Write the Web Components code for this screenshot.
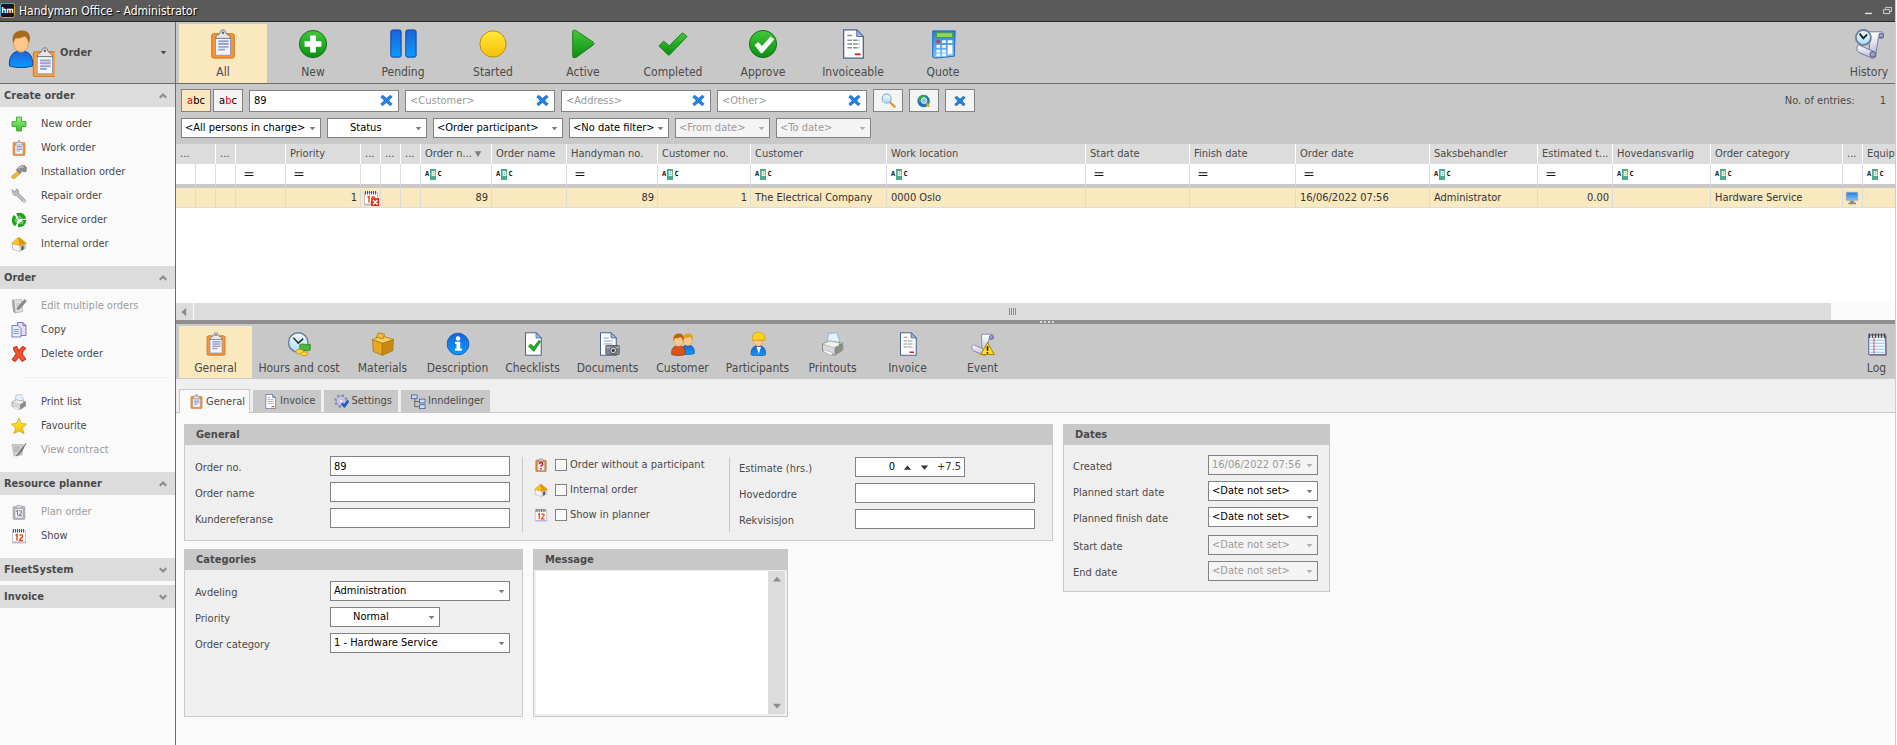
<!DOCTYPE html>
<html lang="en">
<head>
<meta charset="utf-8">
<title>Handyman Office - Administrator</title>
<style>
  html, body { margin: 0; height: 100%; }
  body {
    font: 11px/16px "DejaVu Sans Condensed", "DejaVu Sans", sans-serif;
    color: #4a4a4a;
    background: #fff;
    --bar: #c8c8c8;
    --soft: #dcdcdc;
    --pick: #fae8bf;
    --edge: #828282;
    --rule: #6b6b6b;
  }
</style>
</head>
<body>
<hm-app></hm-app>

<script>
/* ---------- icon drawings, all on a 32 x 32 canvas ---------- */
const DOC = '<path d="M6 1h14l7 7v23H6z" fill="#fff" stroke="#4a6496" stroke-width="1.4"/><path d="M20 1v7h7z" fill="#9dbbe6" stroke="#4a6496"/>';
const BOARD = (a, b) => `<rect x="4" y="5" width="24" height="26" rx="2" fill="${a}" stroke="${b}"/><path d="M8 9h16v19H8z" fill="#f4f4fb" stroke="#8d93b5"/>`;
const CLIP = '<path d="M8 10c0-4 4-3 5-6s1-3 3-3 2 0 3 3 5 2 5 6z" fill="#e4e6ea" stroke="#6f7278"/><circle cx="16" cy="4" r="1.3" fill="#666"/>';
const CAL = '<path d="M3 5h26v25H3z" fill="#fff" stroke="#8a8ac2"/><path d="M3 27h26v3H3z" fill="#b6b8e4"/><path d="M5 2v7M9 2v7M13 2v7M17 2v7M21 2v7M25 2v7" stroke="#555" stroke-width="2"/><path d="M9 15l3-2v12M17 15c3-3 7-1 6 2-1 3-5 4-6 8h7" fill="none" stroke="#f04a14" stroke-width="3"/>';
const CLOCK = (x, y, r) => `<circle cx="${x}" cy="${y}" r="${r}" fill="url(#sky)" stroke="#6d8399" stroke-width="2"/><path d="M${x - r / 2} ${y - r / 2}L${x} ${y + 1}L${x + r / 2} ${y - r / 2.5}" fill="none" stroke="#222" stroke-width="2"/>`;
const SCROLL = '<path d="M14 3h13c4 0 4 7 0 7l-3-1c-1 8-2 12-3 21l-7-1C15 20 14 12 14 3z" fill="url(#par)" stroke="#74749b"/><path d="M3 17l16 7c4 2 2 8-2 7L3 25c-3-2-2-8 0-8z" fill="url(#par)" stroke="#74749b"/><circle cx="18" cy="27" r="3" fill="#9c9cc8" stroke="#55557d"/><circle cx="27" cy="7" r="2.6" fill="#9c9cc8" stroke="#55557d"/>';
const PERSON = (x, y, s, hair, body, dark) => `<g transform="translate(${x} ${y}) scale(${s})"><path d="M1 31c-1-8 3-13 10-13s11 5 10 13c-4 2-16 2-20 0z" fill="${body}" stroke="${dark}"/><ellipse cx="11" cy="11" rx="6.5" ry="8" fill="#ffc88a" stroke="#d08a40" stroke-width=".6"/><path d="M4 11C2 2 8 0 12 0c7 0 8 6 6 11-1-3-2-5-4-6-3 2-6 2-8 2z" fill="${hair}"/></g>`;
const HOUSE = '<path d="M3 15l12-4 14 5v9L17 31 3 26z" fill="#f5f5f5" stroke="#999"/><path d="M17 18l12-3v10l-12 6z" fill="#c9c9c9"/><path d="M21 21l4-2v8l-4 2z" fill="#4b4b4b"/><path d="M1 15L14 3l4 1 13 11-14 4z" fill="#f7c31d" stroke="#c88f0c"/><path d="M17 19L14 3l4 1 13 11z" fill="#dd9a0a"/>';
const PRINTER = '<path d="M8 14L10 2l11-1 4 11-8 5z" fill="#e4f1ff" stroke="#8fa4bd"/><path d="M2 16l9-4 18 3v9l-11 7L2 25z" fill="#d9d9d9" stroke="#777"/><path d="M2 16l9-4 18 3-11 6z" fill="#f0f0f0" stroke="#888" stroke-width=".6"/><path d="M5 24l11 4-3 3-10-5z" fill="#fff" stroke="#999" stroke-width=".7"/><path d="M18 21l11-6v9l-11 7z" fill="#8d8d8d"/><path d="M24 16l3 1" stroke="#39b52e" stroke-width="2"/>';
const BLUEX = '<path d="M6 3c4 2 7 5 10 8 3-3 6-6 10-8l4 5c-4 2-6 5-8 8 2 3 4 6 8 8l-5 5c-3-3-6-6-9-8-3 2-6 5-10 8l-4-5c3-2 6-5 8-8-2-3-5-6-8-8z" fill="#1e84e6" stroke="#0d4a9c" stroke-width="1.4"/>';
const LINES = '<path d="M10 7h6M10 12h13M10 16h13M10 20h13" stroke="#8b8f98" stroke-width="1.6" stroke-dasharray="5 1"/><path d="M18 27h6" stroke="#e02020" stroke-width="2"/>';

const ICONS = {
  logo: '<rect x="1" y="1" width="30" height="30" rx="4" fill="#12131c" stroke="#d8b13a" stroke-width="2"/><path d="M1 28V5a4 4 0 0 1 4-4h22" fill="none" stroke="#3aa0d8" stroke-width="2"/><text x="16" y="22" text-anchor="middle" font-family="DejaVu Sans Condensed" font-weight="bold" font-size="17" fill="#fff">hm</text>',
  userOrder: PERSON(1, 1, .76, '#a8691c', 'url(#blue)', '#174aa8') + '<g transform="translate(15 12) scale(.64)">' + BOARD('#f6a040', '#cf6f12') + '<path d="M11 14h11M11 17h11M11 20h11M11 23h7" stroke="#9aa3cc" stroke-width="2"/>' + CLIP + '</g>',
  board: BOARD('#f59536', '#cf6f12') + '<path d="M11 13h11M11 16h11M11 19h11M11 22h7" stroke="#9aa3cc" stroke-width="2"/>' + CLIP,
  newCircle: '<circle cx="16" cy="16" r="14.5" fill="url(#green)" stroke="#0c6b12"/><path d="M13 7h6v6h6v6h-6v6h-6v-6H7v-6h6z" fill="#fff"/>',
  pause: '<rect x="3" y="1" width="11" height="29" rx="2" fill="url(#blue)" stroke="#0b3fa0"/><rect x="19" y="1" width="11" height="29" rx="2" fill="url(#blue)" stroke="#0b3fa0"/>',
  started: '<circle cx="16" cy="16" r="14" fill="url(#yellow)" stroke="#b98a08"/>',
  play: '<path d="M5 2c1-1 2-1 4 0l18 12c1 1 1 2 0 3L9 30c-2 1-4 1-4-1z" fill="url(#green)" stroke="#1c7a1c"/>',
  check: '<path d="M1 18l5-5 6 5L26 4l5 4-18 19c-1 1-2 1-3 0z" fill="url(#green)" stroke="#128014"/>',
  approve: '<circle cx="16" cy="16" r="14.5" fill="url(#green)" stroke="#0c6b12"/><path d="M7 17l4-3 4 4 9-10 4 3-12 14c-1 1-2 1-3 0z" fill="#fff"/>',
  invoice: DOC + LINES,
  calc: '<path d="M5 2h24l-1 27-20 2-3-1z" fill="url(#blue2)" stroke="#1b66b8"/><rect x="9" y="4" width="17" height="5" fill="#8fd46a" stroke="#4a9a2e"/><rect x="9" y="12" width="4" height="3" fill="#e03528"/><path d="M15 13.500h4M21 13.500h5M9 18.500h4M15 18.500h4M9 23.500h4M15 23.500h4M9 27.500h4M15 27.500h4" stroke="#fff" stroke-width="3"/><path d="M21 17h5v10h-5z" fill="#fff"/>',
  history: '<g transform="translate(2 0)">' + SCROLL + '</g>' + CLOCK(10, 9, 8),
  x: BLUEX,
  find: '<path d="M17 18l12 11" stroke="#f0923c" stroke-width="5" stroke-linecap="round"/><circle cx="12" cy="12" r="9.500" fill="url(#sky)" stroke="#8fb1cf" stroke-width="2.500"/>',
  globe: '<circle cx="15" cy="16" r="13.500" fill="#1f6fd6" stroke="#0c4c94"/><path d="M5 8c5-7 13-5 16-4l-3 6-8 2-3 7-4-2zM19 24l6-8 4 2c-1 6-5 10-9 12z" fill="#2fae3a"/><path d="M20 20l8 9" stroke="#f0923c" stroke-width="4"/><circle cx="16" cy="15" r="6.500" fill="#8fc4ea" stroke="#eaf4fb" stroke-width="2"/>',
  plus: '<path d="M11 2h10v9h9v10h-9v9H11v-9H2V11h9z" fill="url(#lime)" stroke="#2c9a1f" stroke-width="1.500"/>',
  hammer: '<path d="M3 29l-2-4L16 12l5 5L7 29z" fill="#f2b33a" stroke="#b87a10"/><path d="M12 10c4-6 10-8 15-7l4 4-1 8-5 1-3-3-4 5-7-5z" fill="#8d9097" stroke="#4e5157"/><path d="M15 9c3-3 7-4 10-3" stroke="#e4e6ea" stroke-width="2" fill="none"/>',
  wrench: '<path d="M3 9L2 3l4 4 4-1 0-4c4 0 6 3 5 8l14 14c2 3-2 6-5 4L11 15c-4 1-7-1-8-6z" fill="#b9bcc1" stroke="#777a80"/><circle cx="26" cy="26" r="1.500" fill="#fff"/>',
  recycle: '<circle cx="16" cy="16" r="11" fill="none" stroke="#1da51f" stroke-width="7" stroke-dasharray="19 4"/><path d="M16 5l7 7-9 2zM5 14l9 1-6 8zM27 17l-3 10-7-5z" fill="#5fd84f" stroke="#128014"/><circle cx="16" cy="16" r="3" fill="#e9f7e7"/>',
  house: HOUSE,
  edit: '<path d="M2 4l19-1 2 24-16 3z" fill="#e1e1e1" stroke="#8f8f8f"/><path d="M2 4l5 2 2 24-5-3z" fill="#a5a5a5"/><path d="M11 12h9M11 16h8M11 20h9" stroke="#b0b0b0" stroke-width="1.500"/><path d="M12 24l2-6L27 3l4 3-13 15z" fill="#8b8b8b" stroke="#6d6d6d"/>',
  copy: '<path d="M13 1h11l6 6v20H13z" fill="#e8dcf5" stroke="#6a4fa3" stroke-width="1.500"/><path d="M24 1v6h6" fill="none" stroke="#6a4fa3" stroke-width="1.500"/><path d="M2 7h12l6 6v17H2z" fill="#e9f1ff" stroke="#4a6496" stroke-width="1.500"/><path d="M5 15h11M5 19h11M5 23h11" stroke="#7ea0d8" stroke-width="2"/>',
  del: '<path d="M5 3l7-2c1 4 3 6 4 9 2-4 4-8 8-9l6 4c-5 3-7 7-8 11 2 3 5 7 8 10l-8 5c-2-3-4-6-7-9-2 4-4 7-7 9l-6-4c4-4 6-8 8-12-3-4-5-7-5-12z" fill="#f4512c" stroke="#c42a12" stroke-width="2"/>',
  printer: PRINTER,
  star: '<path d="M16 1l5 10 10 1-8 8 3 11-10-5-10 5 3-11-8-8 10-1z" fill="url(#yellow)" stroke="#c9930d" stroke-width="1.300"/>',
  contract: '<path d="M2 5h22l-2 21-16 2z" fill="#d2d2d2" stroke="#969696"/><path d="M6 10h12M6 14h11M6 18h9" stroke="#999" stroke-width="1.500"/><path d="M10 28c4-3 6-9 20-26-3 8-10 20-14 23z" fill="#777" stroke="#666"/>',
  plan: BOARD('#b9b9b9', '#969696') + '<path d="M10 15l3-2v10M16 14c3-2 6 0 5 3l-5 6h6" fill="none" stroke="#8c8c8c" stroke-width="2.500"/><path d="M10 8l2-5h8l2 5z" fill="#ddd" stroke="#8c8c8c"/>',
  cal: CAL,
  calX: CAL + '<rect x="17" y="17" width="15" height="15" fill="#e5301c" stroke="#a81c0c"/><path d="M20 20l9 9M29 20l-9 9" stroke="#fff" stroke-width="3"/>',
  clockCost: CLOCK(15, 14, 13) + '<path d="M17 17c5-3 9 2 14-1v8c-5 3-9-2-14 1z" fill="#4ab83a" stroke="#2a7d1e"/><ellipse cx="17" cy="26" rx="5" ry="3" fill="#ffd83a" stroke="#b88f0c"/><ellipse cx="23" cy="29" rx="5" ry="2.600" fill="#ffd83a" stroke="#b88f0c"/>',
  box: '<path d="M2 10l13 5v16L3 26z" fill="#e8a824" stroke="#a8730a"/><path d="M15 15l15-5-1 15-14 6z" fill="#c98a12" stroke="#a8730a"/><path d="M2 10l12-5 16 5-15 5z" fill="#f7cf5a" stroke="#a8730a"/><path d="M7 7l3-6 8 2-2 6z" fill="#f2bb3a" stroke="#a8730a"/>',
  info: '<circle cx="16" cy="16" r="14.500" fill="url(#blue)" stroke="#0b4fb0"/><circle cx="16" cy="8.500" r="3" fill="#fff"/><path d="M12 13h7v9h2v3H12v-3h2v-6h-2z" fill="#fff"/>',
  docCheck: DOC + '<path d="M10 19l3-3 4 4 7-9 2 2-9 13z" fill="#22ad24" stroke="#128014"/>',
  docCam: DOC + '<path d="M10 8h7M10 12h12M10 16h12" stroke="#7ea0d8" stroke-width="1.500"/><rect x="13" y="18" width="18" height="12" rx="1" fill="#85878c" stroke="#4c4e52"/><path d="M13 21h18" stroke="#c9cbd0"/><circle cx="23" cy="24.500" r="4.500" fill="#c9cbd0" stroke="#33343a"/><circle cx="23" cy="24.500" r="2" fill="#33343a"/>',
  people: PERSON(13, 2, .86, '#e0a020', 'url(#blue)', '#174aa8') + PERSON(0, 2, .9, '#b8650c', '#d9541a', '#9a3208'),
  worker: PERSON(6, 1, .95, '#f5c211', 'url(#blue)', '#174aa8') + '<path d="M9 9C8 3 12 0 17 0s8 4 8 9c2 1 1 2-1 2H9c-1 0-1-1 0-2z" fill="#fbd21c" stroke="#c9930d"/><path d="M14 20l3 9 3-9z" fill="#fff"/>',
  event: SCROLL + '<path d="M22 14l9 16H13z" fill="#ffe02a" stroke="#b38d00" stroke-width="1.400"/><path d="M22 19v6M22 27v2" stroke="#111" stroke-width="2.200"/>',
  log: '<path d="M5 4h22l1 26H5z" fill="#f3f8ff" stroke="#6a6aa6" stroke-width="1.600"/><path d="M28 5v26H6" fill="none" stroke="#777" stroke-width="1.500"/><path d="M7 11h19M7 15h19M7 19h19M7 23h19M7 27h19" stroke="#8fc3f5" stroke-width="1.400"/><path d="M12 8v21" stroke="#e0552a" stroke-width="1.300"/><path d="M6 2v6M10 2v6M14 2v6M18 2v6M22 2v6M26 2v6" stroke="#444" stroke-width="2"/>',
  gear: '<circle cx="15" cy="15" r="10" fill="#c9cbe6" stroke="#8488b5" stroke-width="1.500"/><circle cx="15" cy="15" r="12.500" fill="none" stroke="#8488b5" stroke-width="4" stroke-dasharray="5 4.800"/><circle cx="15" cy="15" r="4" fill="#f4f4fb" stroke="#8488b5"/><path d="M15 22l4-3 3 3 7-9 3 3-9 13z" fill="#1e62d6" stroke="#0b3fa0"/>',
  tree: '<path d="M8 9v18h10M8 16h10" fill="none" stroke="#555" stroke-width="1.800"/><g fill="#c6dcf8" stroke="#3c5f9c" stroke-width="1.700"><rect x="1" y="2" width="12" height="8"/><rect x="18" y="11" width="12" height="8"/><rect x="18" y="23" width="12" height="8"/></g>',
  ask: BOARD('#e08a3c', '#a85a12') + '<path d="M12 14c0-5 8-5 8 0 0 3-4 3-4 6M16 23v3" fill="none" stroke="#e01818" stroke-width="3.500"/><path d="M10 8l2-6h8l2 6z" fill="#ccc" stroke="#777"/>',
  screen: '<path d="M3 3h26v18H3z" fill="url(#blue2)" stroke="#8fa4bd" stroke-width="2"/><path d="M12 22h8v4h5v4H8v-4h4z" fill="#888"/>',
  up: '<path d="M16 9l13 15H3z" fill="currentColor"/>',
  down: '<path d="M16 24L3 9h26z" fill="currentColor"/>',
  sort: '<path d="M16 28L3 5h26z" fill="currentColor"/>',
  left: '<path d="M8 16L23 2v28z" fill="currentColor"/>',
  chevUp: '<path d="M3 23L16 10l13 13" fill="none" stroke="currentColor" stroke-width="9"/>',
  chevDown: '<path d="M3 9l13 13L29 9" fill="none" stroke="currentColor" stroke-width="9"/>',
  eq: '<path d="M2 12h28M2 21h28" stroke="#111" stroke-width="3.500"/>',
  min: '<path d="M4 24h24v5H4z" fill="#e4e4e4"/>',
  restore: '<path d="M9 10V5h21v15h-5" fill="none" stroke="#e4e4e4" stroke-width="3"/><path d="M2 13h21v14H2z" fill="none" stroke="#e4e4e4" stroke-width="3"/>'
};
const grad = (id, a, b) => `<linearGradient id="${id}" x1="0" y1="0" x2="0" y2="1"><stop offset="0" stop-color="${a}"/><stop offset="1" stop-color="${b}"/></linearGradient>`;
const DEFS = {
  green: grad('green', '#43c83a', '#0b8f12'), lime: grad('lime', '#9af08a', '#3cc02c'), blue: grad('blue', '#1b62d8', '#0a9cff'),
  blue2: grad('blue2', '#1f7fe0', '#7cc4ff'), yellow: grad('yellow', '#ffe93a', '#f9bf06'),
  sky: grad('sky', '#f2fbff', '#a9dcf8'), par: grad('par', '#ffffff', '#b4b4d8')
};

/* ---------- small base class ---------- */
class Hm extends HTMLElement {
  connectedCallback() {
    if (this.shadowRoot) return;
    const root = this.attachShadow({ mode: 'open' });
    const t = document.createElement('template');
    t.innerHTML = `<style>:host{display:block}:host,*{box-sizing:border-box}button,input,select,textarea{font:inherit;color:inherit;margin:0;border-radius:0}${this.css()}</style>${this.html()}`;
    root.append(t.content.cloneNode(true));
  }
  a(name, fallback = '') { return this.getAttribute(name) ?? fallback; }
  css() { return ''; }
  html() { return '<slot></slot>'; }
}
const define = (name, css, html = '<slot></slot>') => customElements.define(name, class extends Hm {
  css() { return typeof css === 'function' ? css(this) : css; }
  html() { return typeof html === 'function' ? html(this) : html; }
});
const icon = (name, size = 16) => `<hm-icon name="${name}" size="${size}"></hm-icon>`;

define('hm-icon', e => `:host{display:block;flex:none;width:${e.a('size', 16)}px;height:${e.a('size', 16)}px}svg{display:block;width:100%;height:100%}`,
  e => {
    const art = ICONS[e.a('name')];
    const defs = Object.keys(DEFS).filter(k => art.includes(`url(#${k})`)).map(k => DEFS[k]).join('');
    return `<svg viewBox="0 0 32 32" aria-hidden="true"><defs>${defs}</defs>${art}</svg>`;
  });

/* ---------- window frame ---------- */
define('hm-titlebar', `
  :host{display:flex;align-items:center;height:22px;padding-right:3px;background:#5a5a5a;border-bottom:1px solid #2b2b2b;color:#fff}
  h1{flex:1;margin:0 0 0 4px;font-size:12px;font-weight:normal;text-shadow:1px 1px 1px #000}
  button{display:flex;border:0;padding:0;margin-left:18px;background:none}
  button + button{margin-left:10px}`,
  `${icon('logo', 15)}<h1><slot></slot></h1><button aria-label="Minimise">${icon('min', 9)}</button><button aria-label="Restore">${icon('restore', 9)}</button>`);

/* ---------- sidebar ---------- */
define('hm-module', `
  :host{height:62px;background:var(--bar);border-bottom:1px solid var(--rule)}
  button{display:flex;align-items:center;gap:5px;width:100%;height:100%;padding:0 8px 0 7px;border:0;background:none;font-weight:bold;text-align:left}
  span{flex:1}`,
  `<button>${icon('userOrder', 48)}<span><slot></slot></span>${icon('down', 7)}</button>`);

define('hm-section', `
  h2{margin:0;background:var(--soft);font-size:11px}
  h2 button{display:flex;align-items:center;justify-content:space-between;width:100%;height:23px;padding:0 8px 0 4px;border:0;background:none;font-weight:bold}
  hm-icon{color:#8c8c8c}
  .body{padding:5px 0 10px}
  :host([closed]) .body{padding:0 0 4px}`,
  e => `<h2><button aria-expanded="${!e.hasAttribute('closed')}"><span>${e.a('heading')}</span>${icon(e.hasAttribute('closed') ? 'chevDown' : 'chevUp', 8)}</button></h2><div class="body"><slot></slot></div>`);

define('hm-item', `
  a{display:flex;align-items:center;gap:14px;height:24px;padding-left:11px;color:inherit;text-decoration:none}
  :host([off]) a{color:#9c9c9c}`,
  e => `<a href="#">${icon(e.a('icon'), 16)}<slot></slot></a>`);

define('hm-rule', `:host{height:24px;padding:11px 6px 0 23px}div{border-top:1px solid #f0f0f0}`, `<div></div>`);

define('hm-sidebar', `:host{width:176px;flex:none;background:#fafafa;border-right:1px solid var(--rule)}`,
  `<hm-module>Order</hm-module>
   <nav>
   <hm-section heading="Create order">
     <hm-item icon="plus">New order</hm-item><hm-item icon="board">Work order</hm-item><hm-item icon="hammer">Installation order</hm-item>
     <hm-item icon="wrench">Repair order</hm-item><hm-item icon="recycle">Service order</hm-item><hm-item icon="house">Internal order</hm-item>
   </hm-section>
   <hm-section heading="Order">
     <hm-item icon="edit" off>Edit multiple orders</hm-item><hm-item icon="copy">Copy</hm-item><hm-item icon="del">Delete order</hm-item>
     <hm-rule></hm-rule>
     <hm-item icon="printer">Print list</hm-item><hm-item icon="star">Favourite</hm-item><hm-item icon="contract" off>View contract</hm-item>
   </hm-section>
   <hm-section heading="Resource planner">
     <hm-item icon="plan" off>Plan order</hm-item><hm-item icon="cal">Show</hm-item>
   </hm-section>
   <hm-section heading="FleetSystem" closed></hm-section>
   <hm-section heading="Invoice" closed></hm-section>
   </nav>`);

/* ---------- toolbars ---------- */
define('hm-tool', e => `
  :host{flex:none;width:88px}
  :host([small]){width:73px}
  :host([wide]){width:90px}
  :host([end]){width:52px;margin-left:auto}
  :host([small][end]){width:37px}
  button{display:flex;flex-direction:column;align-items:center;width:100%;height:100%;padding:5px 0 2px;border:0;background:none;font-size:12px;white-space:nowrap;gap:4px}
  :host([small]) button{padding:6px 0 3px;gap:3px}
  :host([on]) button{background:var(--pick)}
  span{line-height:18px}`,
  e => `<button>${icon(e.a('icon'), e.hasAttribute('small') ? 24 : 30)}<span><slot></slot></span></button>`);

define('hm-toolbar', `
  :host{display:flex;gap:2px;height:62px;padding:2px 0 0 3px;background:var(--bar);border-bottom:1px solid var(--rule)}
  :host([small]){height:55px;padding-bottom:1px;border:0}`);

/* ---------- form controls ---------- */
define('hm-search', `
  :host{flex:0 1 150px;min-width:0;height:22px}
  div{display:flex;align-items:center;height:100%;border:1px solid var(--edge);background:#fff;padding-right:5px}
  input{flex:1;width:0;min-width:0;height:100%;border:0;padding:0 4px;background:none;color:#000;outline:0}
  input::placeholder{color:#9a9a9a;opacity:1}
  button{display:flex;border:0;padding:0;background:none}`,
  e => `<div><input type="text" aria-label="${e.a('label')}" value="${e.a('value')}" placeholder="${e.a('hint')}"><button aria-label="Clear">${icon('x', 13)}</button></div>`);

define('hm-select', `
  :host{height:20px}
  div{display:grid;height:100%;border:1px solid var(--edge);background:#fff;color:#000;align-items:center}
  select,hm-icon{grid-area:1/1}
  select{appearance:none;width:100%;height:100%;border:0;background:none;padding:0 12px 0 3px;opacity:1;outline:0}
  :host([indent]) select{padding-left:22px}
  hm-icon{justify-self:end;margin-right:4px;color:#7d7d7d;pointer-events:none}
  :host([off]) div{background:#f4f4f4;color:#9a9a9a}
  :host([off]) hm-icon{color:#b0b0b0}`,
  e => `<div><select aria-label="${e.a('label')}" ${e.hasAttribute('off') ? 'disabled' : ''}><option>${e.a('value').replace(/</g, '&lt;')}</option></select>${icon('down', 7)}</div>`);

define('hm-filters', `
  :host{display:flex;flex-direction:column;gap:6px;padding:5px 9px 6px 5px;background:var(--bar)}
  .row{display:flex;align-items:center;gap:6px;min-height:20px}
  .row > button{display:flex;align-items:center;justify-content:center;flex:none;width:30px;height:23px;padding:0;border:1px solid var(--edge);background:#f4f4f4;color:#000}
  .pair{display:flex;gap:2px}
  .pair button{display:block;width:30px;height:23px;padding:0;border:1px solid var(--edge);background:#f4f4f4;color:#000;text-align:center}
  .pair button:first-child{background:var(--pick)}
  i{font-style:normal;color:red}
  p{display:flex;gap:25px;margin:0 0 0 auto}
  .w140{width:140px}.w130{width:130px}.w100{width:100px}.w95{width:95px}`,
  `<div class="row"><span class="pair"><button><i>a</i>bc</button><button>a<i>b</i>c</button></span>
     <hm-search label="Order" value="89"></hm-search><hm-search label="Customer" hint="&lt;Customer&gt;"></hm-search>
     <hm-search label="Address" hint="&lt;Address&gt;"></hm-search><hm-search label="Other" hint="&lt;Other&gt;"></hm-search>
     <button aria-label="Search">${icon('find', 15)}</button><button aria-label="Search online">${icon('globe', 14)}</button><button aria-label="Clear all">${icon('x', 12)}</button>
     <p><span>No. of entries:</span><span>1</span></p></div>
   <div class="row">
     <hm-select class="w140" label="Person in charge" value="<All persons in charge>"></hm-select>
     <hm-select class="w100" label="Status" indent value="Status"></hm-select>
     <hm-select class="w130" label="Participant" value="<Order participant>"></hm-select>
     <hm-select class="w100" label="Date filter" value="<No date filter>"></hm-select>
     <hm-select class="w95" label="From date" off value="<From date>"></hm-select>
     <hm-select class="w95" label="To date" off value="<To date>"></hm-select></div>`);

/* ---------- order list ---------- */
define('hm-abc', `
  :host{display:flex;align-items:center;gap:1px;height:11px;font:bold 7px/11px "DejaVu Sans Mono",monospace;color:#111}
  b{padding:0 1px;background:#4bab88;color:#fff}`, `<span>A</span><b>B</b><span>C</span>`);

/* width, heading, filter kind, value, right aligned */
const COLS = [
  [20], [20], [20, '...'], [50, '', 'eq'], [75, 'Priority', 'eq', '1', 1], [20, '...', '', icon('calX', 16)], [20, '...'], [20, '...'],
  [71, 'Order n...', 'abc', '89', 1], [75, 'Order name', 'abc'], [91, 'Handyman no.', 'eq', '89', 1], [93, 'Customer no.', 'abc', '1', 1],
  [136, 'Customer', 'abc', 'The Electrical Company'], [199, 'Work location', 'abc', '0000 Oslo'], [104, 'Start date', 'eq'], [106, 'Finish date', 'eq'],
  [134, 'Order date', 'eq', '16/06/2022 07:56'], [108, 'Saksbehandler', 'abc', 'Administrator'], [75, 'Estimated t...', 'eq', '0.00', 1],
  [98, 'Hovedansvarlig', 'abc'], [132, 'Order category', 'abc', 'Hardware Service'], [20, '...', '', icon('screen', 14)], [70, 'Equipment', 'abc']
];
define('hm-grid', `
  :host{height:159px;overflow:hidden;background:#fff}
  table{table-layout:fixed;width:1757px;border-collapse:separate;border-spacing:0}
  th,td{height:20px;padding:0 4px;overflow:hidden;white-space:nowrap;text-align:left;font-weight:normal;line-height:16px;border-right:1px solid var(--soft)}
  th{padding:0 0 0 4px;background:var(--soft);border-color:#fff}
  th div{display:flex;align-items:center;gap:2px}
  th hm-icon{color:#7d7d7d}
  .f td{height:24px;border-bottom:4px solid var(--bar)}
  .f hm-icon{margin-left:4px}
  .d td{background:var(--pick);color:#333;border-bottom:1px solid var(--soft)}
  .d td.r{text-align:right;padding-right:3px}
  .d td.i{padding:0 2px}`,
  () => `<table><colgroup>${COLS.map(c => `<col style="width:${c[0]}px">`).join('')}</colgroup>
    <thead><tr><th colspan="2">...</th>${COLS.slice(2).map(c => `<th>${c[1] === 'Order n...' ? `<div>Order n... ${icon('sort', 8)}</div>` : c[1] || ''}</th>`).join('')}</tr></thead>
    <tbody><tr class="f">${COLS.map(c => `<td>${c[2] === 'eq' ? icon('eq', 10) : c[2] ? '<hm-abc></hm-abc>' : ''}</td>`).join('')}</tr>
    <tr class="d">${COLS.map(c => `<td class="${c[4] ? 'r' : (c[3] || '')[0] === '<' ? 'i' : ''}">${c[3] || ''}</td>`).join('')}</tr></tbody></table>`);

define('hm-hscroll', `
  :host{display:flex;gap:1px;height:17px;background:#fafafa;color:#8c8c8c}
  button{display:flex;align-items:center;justify-content:center;width:17px;padding:0 2px 0 0;border:0;background:var(--soft)}
  .thumb{flex:1;display:flex;align-items:center;justify-content:center;gap:1px;margin-right:64px;background:var(--soft)}
  i{width:1px;height:7px;background:#8c8c8c}`,
  `<button aria-label="Scroll left">${icon('left', 10)}</button><div class="thumb"><i></i><i></i><i></i><i></i></div>`);

define('hm-splitter', `
  :host{display:flex;align-items:center;justify-content:center;gap:2px;height:4px;padding-left:22px;background:#8f8f8f}
  i{width:2px;height:2px;background:#dcdcdc}`, `<i></i><i></i><i></i><i></i>`);

/* ---------- tabs ---------- */
define('hm-tabs', `
  :host{display:flex;align-items:flex-end;gap:3px;height:34px;padding-left:3px;background:#efefef;border-bottom:1px solid var(--bar)}`);
define('hm-tab', `
  button{display:flex;align-items:center;gap:2px;height:22px;padding:0 6px 0 10px;border:0;background:var(--bar)}
  :host([on]){margin-bottom:-1px}
  :host([on]) button{height:24px;padding:0 4px 0 9px;border:1px solid var(--bar);border-bottom:0;background:#fafafa}`,
  e => `<button role="tab" aria-selected="${e.hasAttribute('on')}">${icon(e.a('icon'), 15)}<slot></slot></button>`);

/* ---------- order form ---------- */
define('hm-panel', `
  :host{display:flex;flex-direction:column;background:#efefef;border:1px solid var(--bar)}
  h3{margin:0;height:20px;padding:0 11px;background:var(--bar);font-size:11px;line-height:20px}
  .body{flex:1;display:flex}`,
  e => `<h3>${e.a('heading')}</h3><div class="body"><slot></slot></div>`);

define('hm-field', e => `
  .f{display:flex;align-items:flex-start;height:20px}
  label{flex:none;width:${e.a('label-width', 135)}px;padding-top:4px;line-height:16px}
  .c{flex:none;width:${e.a('width', 180)}px;height:20px;border:1px solid var(--edge);background:#fff;padding:0 3px;color:#000;outline:0}
  .s{display:grid;align-items:center;padding:0}
  select{grid-area:1/1;appearance:none;width:100%;height:100%;border:0;background:none;opacity:1;padding:0 12px 0 3px;outline:0}
  :host([indent]) select{padding-left:22px}
  .s hm-icon{grid-area:1/1;justify-self:end;margin-right:4px;color:#7d7d7d;pointer-events:none}
  :host([off]) .s{background:#f4f4f4;color:#9a9a9a}
  :host([off]) .s hm-icon{color:#b0b0b0}
  .spin{display:flex;align-items:center;gap:8px}
  .spin input{flex:1;min-width:0;border:0;padding:0;text-align:right;background:none;outline:0}
  .spin button{display:flex;border:0;padding:0;background:none;color:#333}`,
  e => {
    const v = e.a('value').replace(/</g, '&lt;');
    const kind = e.a('kind');
    return `<div class="f"><label for="c">${e.a('label')}</label>` + (
      kind === 'select' ? `<div class="c s"><select id="c" ${e.hasAttribute('off') ? 'disabled' : ''}><option>${v}</option></select>${icon('down', 7)}</div>` :
      kind === 'spin' ? `<div class="c spin"><input id="c" type="text" value="${v}"><button aria-label="More">${icon('up', 9)}</button><button aria-label="Less">${icon('down', 9)}</button><button>+7.5</button></div>` :
      `<input class="c" id="c" type="text" value="${v}">`) + '</div>';
  });

define('hm-check', `
  :host{display:flex;align-items:center;height:16px;gap:7px}
  label{display:flex;align-items:center;gap:3px;white-space:nowrap}
  input{appearance:none;width:12px;height:12px;border:1px solid var(--edge);background:#fafafa}`,
  e => `${icon(e.a('icon'), 14)}<label><input type="checkbox"><slot></slot></label>`);

define('hm-form', `
  :host{display:flex;align-items:flex-start;flex-wrap:wrap;gap:10px;padding:11px 8px}
  .left{display:flex;flex-direction:column;gap:8px}
  .pair{display:flex;gap:10px}
  .general{width:869px;height:117px}
  .cat{width:339px;height:168px}
  .msg{width:255px}
  .dates{width:267px;height:168px}
  .col{display:flex;flex-direction:column;gap:6px;padding:11px 0 0 10px}
  .checks{gap:9px;width:207px;margin:12px 0 8px 12px;padding:0 0 0 11px;border-left:1px solid var(--bar)}
  .more{padding:0 0 0 9px;margin:12px 0 8px;border-left:1px solid var(--bar)}
  .dates .col{padding-left:9px;padding-top:10px}
  .gap{padding-top:2px}
  textarea{flex:1;min-width:0;margin:1px 0 2px 2px;border:0;padding:2px;background:#fff;resize:none;outline:0}
  .bar{display:flex;flex-direction:column;justify-content:space-between;align-items:center;width:17px;margin:1px 2px 2px 0;padding:3px 0;background:var(--soft);color:#8c8c8c}
  .bar button{display:flex;border:0;padding:0;background:none}`,
  `<div class="left">
     <hm-panel class="general" heading="General">
       <div class="col"><hm-field label="Order no." value="89"></hm-field><hm-field label="Order name"></hm-field><hm-field label="Kundereferanse"></hm-field></div>
       <div class="col checks"><hm-check icon="ask">Order without a participant</hm-check><hm-check icon="house">Internal order</hm-check><hm-check icon="cal">Show in planner</hm-check></div>
       <div class="col more"><hm-field label-width="116" kind="spin" width="110" label="Estimate (hrs.)" value="0"></hm-field><hm-field label-width="116" label="Hovedordre"></hm-field><hm-field label-width="116" label="Rekvisisjon"></hm-field></div>
     </hm-panel>
     <div class="pair">
       <hm-panel class="cat" heading="Categories"><div class="col"><hm-field kind="select" label="Avdeling" value="Administration"></hm-field><hm-field kind="select" indent width="110" label="Priority" value="Normal"></hm-field><hm-field kind="select" label="Order category" value="1 - Hardware Service"></hm-field></div></hm-panel>
       <hm-panel class="msg" heading="Message"><textarea aria-label="Message"></textarea><div class="bar"><button aria-label="Scroll up">${icon('up', 10)}</button><button aria-label="Scroll down">${icon('down', 10)}</button></div></hm-panel>
     </div>
   </div>
   <hm-panel class="dates" heading="Dates"><div class="col">
     <hm-field kind="select" off width="110" label="Created" value="16/06/2022 07:56"></hm-field>
     <hm-field kind="select" width="110" label="Planned start date" value="<Date not set>"></hm-field>
     <hm-field kind="select" width="110" label="Planned finish date" value="<Date not set>"></hm-field>
     <hm-field class="gap" kind="select" off width="110" label="Start date" value="<Date not set>"></hm-field>
     <hm-field kind="select" off width="110" label="End date" value="<Date not set>"></hm-field>
   </div></hm-panel>`);

/* ---------- whole window ---------- */
define('hm-app', `
  :host{display:flex;flex-direction:column;min-height:100%;margin-right:1px;border-right:1px solid #ccc}
  .cols{flex:1;display:flex;min-width:0}
  main{flex:1;min-width:0;display:flex;flex-direction:column;background:#fafafa}`,
  `<hm-titlebar>Handyman Office - Administrator</hm-titlebar>
   <div class="cols"><hm-sidebar></hm-sidebar>
   <main>
     <hm-toolbar>
       <hm-tool icon="board" on>All</hm-tool><hm-tool icon="newCircle">New</hm-tool><hm-tool icon="pause">Pending</hm-tool><hm-tool icon="started">Started</hm-tool>
       <hm-tool icon="play">Active</hm-tool><hm-tool icon="check">Completed</hm-tool><hm-tool icon="approve">Approve</hm-tool><hm-tool icon="invoice">Invoiceable</hm-tool>
       <hm-tool icon="calc">Quote</hm-tool><hm-tool icon="history" end>History</hm-tool>
     </hm-toolbar>
     <hm-filters></hm-filters>
     <hm-grid></hm-grid>
     <hm-hscroll></hm-hscroll>
     <hm-splitter></hm-splitter>
     <hm-toolbar small>
       <hm-tool small icon="board" on>General</hm-tool><hm-tool small wide icon="clockCost">Hours and cost</hm-tool><hm-tool small icon="box">Materials</hm-tool>
       <hm-tool small icon="info">Description</hm-tool><hm-tool small icon="docCheck">Checklists</hm-tool><hm-tool small icon="docCam">Documents</hm-tool>
       <hm-tool small icon="people">Customer</hm-tool><hm-tool small icon="worker">Participants</hm-tool><hm-tool small icon="printer">Printouts</hm-tool>
       <hm-tool small icon="invoice">Invoice</hm-tool><hm-tool small icon="event">Event</hm-tool><hm-tool small icon="log" end>Log</hm-tool>
     </hm-toolbar>
     <hm-tabs role="tablist"><hm-tab icon="board" on>General</hm-tab><hm-tab icon="invoice">Invoice</hm-tab><hm-tab icon="gear">Settings</hm-tab><hm-tab icon="tree">Inndelinger</hm-tab></hm-tabs>
     <hm-form></hm-form>
   </main></div>`);
</script>
</body>
</html>
